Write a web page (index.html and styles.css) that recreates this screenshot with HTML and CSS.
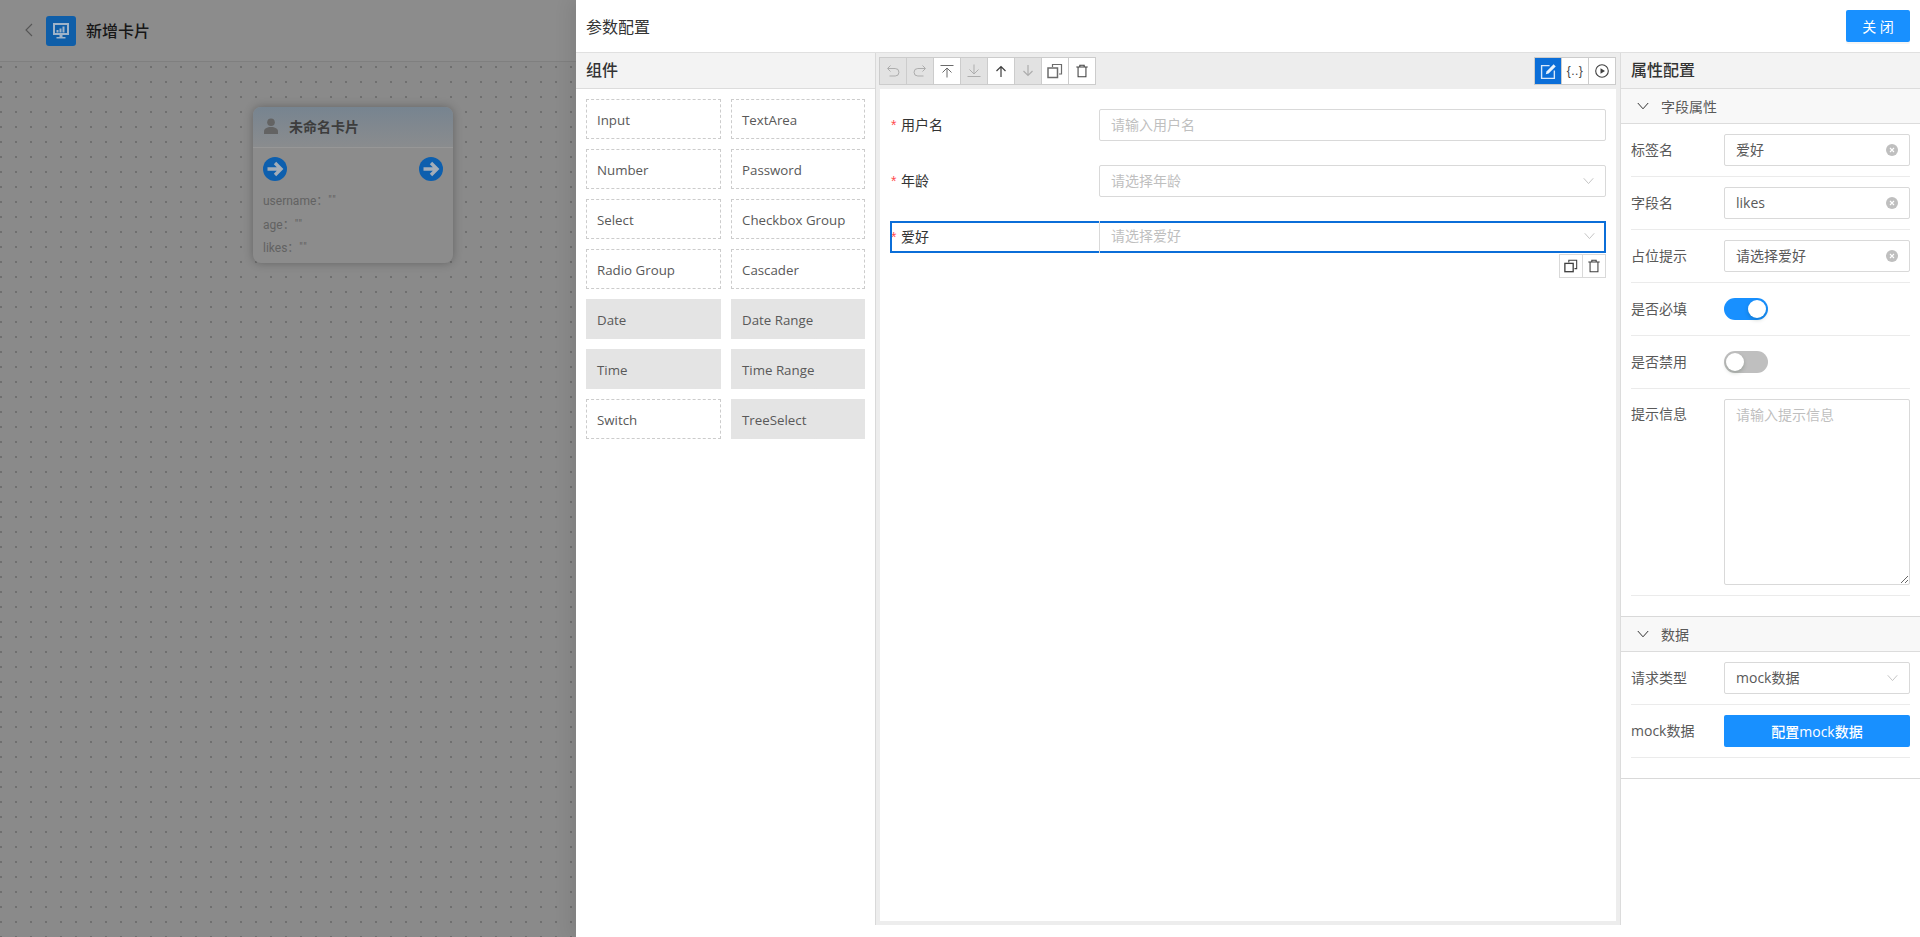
FILE: index.html
```html
<!DOCTYPE html>
<html lang="zh-CN">
<head>
<meta charset="utf-8">
<title>新增卡片</title>
<link rel="stylesheet" href="styles.css">
</head>
<body>
<svg class="sprite" xmlns="http://www.w3.org/2000/svg">
  <symbol id="i-undo" viewBox="0 0 16 16"><path d="M5.500 2.500 2.500 5.500 5.500 8.500M3 5.500h7.200a3.300 3.300 0 0 1 0 7.500H4.500" fill="none" stroke="currentColor"/></symbol>
  <symbol id="i-redo" viewBox="0 0 16 16"><path d="M10.500 2.500 13.500 5.500 10.500 8.500M13 5.500H5.800a3.300 3.300 0 0 0 0 7.500H11.500" fill="none" stroke="currentColor"/></symbol>
  <symbol id="i-top" viewBox="0 0 16 16"><path d="M1.500 2.500h13M8 14.500V5M3.500 9.500 8 5l4.500 4.500" fill="none" stroke="currentColor"/></symbol>
  <symbol id="i-bottom" viewBox="0 0 16 16"><path d="M1.500 13.500h13M8 1.500V11M3.500 6.500 8 11l4.500-4.500" fill="none" stroke="currentColor"/></symbol>
  <symbol id="i-up" viewBox="0 0 16 16"><path d="M8 14V3.500M3.500 8 8 3.500 12.500 8" fill="none" stroke="currentColor" stroke-width="1.200"/></symbol>
  <symbol id="i-down" viewBox="0 0 16 16"><path d="M8 2v10.500M3.500 8 8 12.500 12.500 8" fill="none" stroke="currentColor" stroke-width="1.200"/></symbol>
  <symbol id="i-copy" viewBox="0 0 16 16"><path d="M5.500 4V1.500h9V11H12" fill="none" stroke="currentColor" stroke-width="1.200"/><rect x="1" y="5" width="9.500" height="9.500" fill="none" stroke="currentColor" stroke-width="1.500"/></symbol>
  <symbol id="i-del" viewBox="0 0 16 16"><path d="M1.500 3.500h13M5.500 3.500V1.500h5v2M3.500 3.500V14.500h9V3.500" fill="none" stroke="currentColor" stroke-width="1.200"/></symbol>
  <symbol id="i-chev" viewBox="0 0 12 8"><path d="M.8 1 6 6.800 11.200 1" fill="none" stroke="currentColor"/></symbol>
  <symbol id="i-clear" viewBox="0 0 12 12"><circle cx="6" cy="6" r="6" fill="currentColor"/><path d="M4 4l4 4M8 4 4 8" stroke="#fff" stroke-width="1.100"/></symbol>
  <symbol id="i-arrow" viewBox="0 0 24 24"><circle cx="12" cy="12" r="12" fill="#0d5fae"/><path d="M4.500 12H17M12 6l6 6-6 6" fill="none" stroke="#a3adb8" stroke-width="3.400"/></symbol>
</svg>

<div class="page">
  <header class="topbar">
    <svg class="back" viewBox="0 0 8 14" width="8" height="14"><path d="M7 1 1 7l6 6" fill="none" stroke="currentColor" stroke-width="1.100"/></svg>
    <span class="logo">
      <svg viewBox="0 0 20 20" width="20" height="20"><path d="M2 2h16v12H2z" fill="#9fb3c8"/><path d="M4 4h12v8H4z" fill="#0f5ea8"/><path d="M5.500 9h2v2.500h-2zM8.500 7.500h2v4h-2zM11.500 5.500h2v6h-2z" fill="#9fb3c8"/><path d="M8.500 14h3v2h3v1.500h-9V16h3z" fill="#9fb3c8"/></svg>
    </span>
    <span class="page-title">新增卡片</span>
  </header>
  <main class="canvas">
    <article class="node">
      <div class="node-head">
        <svg class="node-user" viewBox="0 0 14 16" width="14" height="16"><circle cx="7" cy="4.200" r="3.800" fill="#636363"/><path d="M0 16v-2.500C0 10.500 3 9 7 9s7 1.500 7 4.500V16z" fill="#636363"/></svg>
        <span class="node-title">未命名卡片</span>
      </div>
      <div class="node-ports">
        <svg width="24" height="24"><use href="#i-arrow"/></svg>
        <svg width="24" height="24"><use href="#i-arrow"/></svg>
      </div>
      <div class="node-fields">
        <p>username：<q>""</q></p>
        <p>age：<q>""</q></p>
        <p>likes：<q>""</q></p>
      </div>
    </article>
  </main>
</div>

<aside class="drawer">
  <div class="drawer-head">
    <span class="drawer-title">参数配置</span>
    <button class="btn-primary btn-close" type="button">关 闭</button>
  </div>
  <div class="drawer-body">
    <section class="widgets">
      <h2 class="panel-head">组件</h2>
      <div class="widget-grid">
        <div class="widget">Input</div>
        <div class="widget">TextArea</div>
        <div class="widget">Number</div>
        <div class="widget">Password</div>
        <div class="widget">Select</div>
        <div class="widget">Checkbox Group</div>
        <div class="widget">Radio Group</div>
        <div class="widget">Cascader</div>
        <div class="widget off">Date</div>
        <div class="widget off">Date Range</div>
        <div class="widget off">Time</div>
        <div class="widget off">Time Range</div>
        <div class="widget">Switch</div>
        <div class="widget off">TreeSelect</div>
      </div>
    </section>

    <section class="stage">
      <div class="toolbar">
        <div class="tools">
          <button class="tool dis" type="button"><svg width="16" height="16"><use href="#i-undo"/></svg></button>
          <button class="tool dis" type="button"><svg width="16" height="16"><use href="#i-redo"/></svg></button>
          <button class="tool" type="button"><svg width="16" height="16"><use href="#i-top"/></svg></button>
          <button class="tool dis" type="button"><svg width="16" height="16"><use href="#i-bottom"/></svg></button>
          <button class="tool dark" type="button"><svg width="16" height="16"><use href="#i-up"/></svg></button>
          <button class="tool dis" type="button"><svg width="16" height="16"><use href="#i-down"/></svg></button>
          <button class="tool" type="button"><svg width="16" height="16"><use href="#i-copy"/></svg></button>
          <button class="tool dark" type="button"><svg width="14" height="14"><use href="#i-del"/></svg></button>
        </div>
        <div class="tools">
          <button class="tool active" type="button">
            <svg width="17" height="17" viewBox="0 0 16 16"><path d="M13.500 7V14.500H1.500V2.500H9" fill="none" stroke="#d8e8fa" stroke-width="1.300"/><path d="M5.500 10.500l.6-2.600L12.800 1.200l2 2-6.700 6.700z" fill="#e8f2fc"/></svg>
          </button>
          <button class="tool dark braces" type="button">{..}</button>
          <button class="tool dark" type="button">
            <svg width="14" height="14" viewBox="0 0 14 14"><circle cx="7" cy="7" r="6.300" fill="none" stroke="currentColor" stroke-width="1.100"/><path d="M5.500 4.200 10 7l-4.500 2.800z" fill="currentColor"/></svg>
          </button>
        </div>
      </div>
      <form class="form">
        <div class="field">
          <label class="field-label"><i>*</i>用户名</label>
          <div class="control">请输入用户名</div>
        </div>
        <div class="field">
          <label class="field-label"><i>*</i>年龄</label>
          <div class="control">请选择年龄<svg class="chev" width="11" height="8"><use href="#i-chev"/></svg></div>
        </div>
        <div class="field selected">
          <label class="field-label"><i>*</i>爱好</label>
          <div class="control">请选择爱好<svg class="chev" width="11" height="8"><use href="#i-chev"/></svg></div>
          <div class="field-actions">
            <button class="tool dark" type="button"><svg width="14" height="14"><use href="#i-copy"/></svg></button>
            <button class="tool dark" type="button"><svg width="14" height="14"><use href="#i-del"/></svg></button>
          </div>
        </div>
      </form>
    </section>

    <section class="props">
      <h2 class="panel-head">属性配置</h2>
      <div class="group">
        <div class="group-head"><svg width="12" height="8"><use href="#i-chev"/></svg>字段属性</div>
        <div class="prop"><span class="prop-label">标签名</span><div class="box"><span>爱好</span><svg class="clear" width="12" height="12"><use href="#i-clear"/></svg></div></div>
        <div class="prop"><span class="prop-label">字段名</span><div class="box"><span>likes</span><svg class="clear" width="12" height="12"><use href="#i-clear"/></svg></div></div>
        <div class="prop"><span class="prop-label">占位提示</span><div class="box"><span>请选择爱好</span><svg class="clear" width="12" height="12"><use href="#i-clear"/></svg></div></div>
        <div class="prop"><span class="prop-label">是否必填</span><span class="switch on"></span></div>
        <div class="prop"><span class="prop-label">是否禁用</span><span class="switch"></span></div>
        <div class="prop top"><span class="prop-label">提示信息</span><textarea class="area" placeholder="请输入提示信息"></textarea></div>
      </div>
      <div class="group">
        <div class="group-head"><svg width="12" height="8"><use href="#i-chev"/></svg>数据</div>
        <div class="prop"><span class="prop-label">请求类型</span><div class="box"><span>mock数据</span><svg class="select-chev" width="11" height="8"><use href="#i-chev"/></svg></div></div>
        <div class="prop"><span class="prop-label">mock数据</span><button class="btn-primary btn-mock" type="button">配置mock数据</button></div>
      </div>
    </section>
  </div>
</aside>
</body>
</html>
```
FILE: styles.css
```css
* { box-sizing: border-box; }
html, body { margin: 0; height: 100%; overflow: hidden; }
body { font-family: "Open Sans", "Noto Sans CJK SC", sans-serif; font-size: 14px; color: #595959; background: #8b8b8b; }
.sprite { display: none; }
button { font-family: inherit; }

/* dimmed page behind the drawer */
.page { height: 937px; display: flex; flex-direction: column; }
.topbar { height: 62px; flex: none; display: flex; align-items: flex-start; padding: 16px 0 0 25px; background: #8c8c8c; border-bottom: 1px solid #7f7f7f; }
.back { color: #565656; margin-top: 7px; }
.logo { width: 30px; height: 30px; margin-left: 13px; border-radius: 3px; background: #0f5ea8; display: flex; align-items: center; justify-content: center; }
.page-title { margin-left: 10px; font-size: 16px; line-height: 30px; font-weight: 500; color: #171717; }
.canvas { flex: 1; padding: 45px 0 0 253px; background-color: #8a8a8a; background-image: radial-gradient(circle at 1px 1px, #666 .6px, transparent 1px); background-size: 15px 15px; background-position: 0 4px; }
.node { width: 200px; height: 156px; border-radius: 8px; background: #8c8c8c; box-shadow: 0 0 10px rgba(0,0,0,.28); overflow: hidden; }
.node-head { height: 41px; display: flex; align-items: center; padding: 0 0 2px 11px; background: linear-gradient(#778490, #8a8c8e); border-bottom: 1px solid #979797; }
.node-title { margin-left: 11px; font-size: 14px; font-weight: 700; color: #3d3d3d; }
.node-ports { display: flex; justify-content: space-between; padding: 9px 10px 0; }
.node-fields { padding: 7px 10px 0; font-family: Roboto, "Noto Sans CJK SC", sans-serif; font-size: 12px; color: #626262; }
.node-fields p { margin: 0; height: 23.500px; line-height: 23.500px; white-space: nowrap; }
.node-fields q { quotes: none; font-size: 11px; letter-spacing: 1px; vertical-align: 2px; }

/* drawer */
.drawer { position: absolute; top: 0; right: 0; bottom: 0; width: 1344px; display: flex; flex-direction: column; background: #fff; box-shadow: -6px 0 16px rgba(0,0,0,.08); }
.drawer-head { height: 53px; flex: none; display: flex; align-items: center; justify-content: space-between; padding: 0 10px; border-bottom: 1px solid #e0e0e0; }
.drawer-title { font-size: 16px; color: #333; }
.btn-primary { border: 0; border-radius: 2px; background: #1890ff; color: #fff; font-size: 14px; padding: 0; }
.btn-close { width: 64px; height: 32px; box-shadow: 0 2px 0 rgba(0,0,0,.04); }
.drawer-body { flex: none; height: 872px; display: flex; }

.panel-head { margin: 0; height: 36px; padding: 0 10px; font-size: 16px; line-height: 35px; font-weight: 500; color: #333; background: #f3f3f3; border-bottom: 1px solid #dcdcdc; }

.widgets { width: 300px; flex: none; border-right: 1px solid #d9d9d9; }
.widget-grid { display: grid; grid-template-columns: 135px 134px; grid-auto-rows: 40px; gap: 10px; padding: 10px 10px 0; font-size: 13.300px; }
.widget { display: flex; align-items: center; padding: 1px 0 0 10px; border: 1px dashed #ccc; white-space: nowrap; }
.widget.off { background: #e4e4e4; border-color: #e4e4e4; }

.stage { width: 744px; flex: none; display: flex; flex-direction: column; background: #ededed; padding: 0 4px 4px; }
.toolbar { height: 36px; flex: none; display: flex; justify-content: space-between; align-items: flex-start; padding-top: 4px; margin-left: -1px; }
.tools { display: flex; border: 1px solid #ccc; height: 28px; background: #ccc; gap: 1px; }
.tool { width: 26px; height: 26px; padding: 0; border: 0; background: #fff; color: #6b6b6b; display: flex; align-items: center; justify-content: center; }
.tool.dis { background: #e2e2e2; color: #adadad; }
.tool.dark { color: #3f3f3f; }
.tool.active { background: #0b6ed8; color: #fff; }
.tool.braces { font-family: "Liberation Sans", sans-serif; font-size: 12px; letter-spacing: .5px; }

.form { flex: 1; background: #fff; padding: 20px 10px 0; }
.field { position: relative; display: flex; height: 32px; margin-bottom: 24px; }
.field-label { width: 209px; flex: none; line-height: 32px; padding-left: 1px; color: #333; }
.field-label i { display: inline-block; width: 10px; font-style: normal; font-size: 14px; line-height: 1; color: #ff4d4f; font-family: "Liberation Sans", sans-serif; }
.control { flex: 1; position: relative; border: 1px solid #d9d9d9; border-radius: 2px; line-height: 30px; padding-left: 11px; color: #bfbfbf; }
.chev { position: absolute; right: 11px; top: 11px; color: #bfbfbf; }
.field.selected { outline: 2px solid #0b6ed8; outline-offset: -2px; }
.field.selected .control { border-width: 0 0 0 1px; border-radius: 0; }
.field-actions { position: absolute; right: 0; top: 33px; display: flex; gap: 1px; height: 24px; border: 1px solid #d9d9d9; background: #d9d9d9; }
.field-actions .tool { width: 22px; height: 22px; }

.props { width: 300px; flex: none; border-left: 1px solid #dcdcdc; }
.group { padding-bottom: 20px; border-bottom: 1px solid #d9d9d9; }
.group-head { height: 35px; display: flex; align-items: center; padding-left: 16px; background: #f8f8f8; border-bottom: 1px solid #dcdcdc; color: #595959; }
.group-head svg { margin-right: 12px; color: #333; }
.prop { margin-left: 10px; margin-right: 10px; padding: 10px 0; border-bottom: 1px solid #ebebeb; display: flex; align-items: center; height: 53px; }
.prop.top { height: 207px; align-items: flex-start; }
.prop-label { width: 93px; flex: none; color: #595959; line-height: 32px; white-space: nowrap; }
.prop.top .prop-label { line-height: 30px; }
.box { flex: 1; height: 32px; position: relative; border: 1px solid #d9d9d9; border-radius: 2px; line-height: 30px; padding-left: 11px; color: #595959; }
.clear { position: absolute; right: 11px; top: 9px; color: #bfbfbf; }
.select-chev { position: absolute; right: 11px; top: 11px; color: #bfbfbf; }
.switch { position: relative; width: 44px; height: 22px; border-radius: 11px; background: #bfbfbf; }
.switch::after { content: ""; position: absolute; top: 2px; left: 2px; width: 18px; height: 18px; border-radius: 50%; background: #fff; box-shadow: 0 2px 4px rgba(0,35,11,.2); }
.switch.on { background: #1890ff; }
.switch.on::after { left: 24px; }
.area { flex: 1; height: 186px; border: 1px solid #d9d9d9; border-radius: 2px; padding: 4px 11px; font: inherit; line-height: 22px; }
.area::placeholder { color: #bfbfbf; opacity: 1; }
.btn-mock { flex: 1; height: 32px; font-weight: 500; }
```
